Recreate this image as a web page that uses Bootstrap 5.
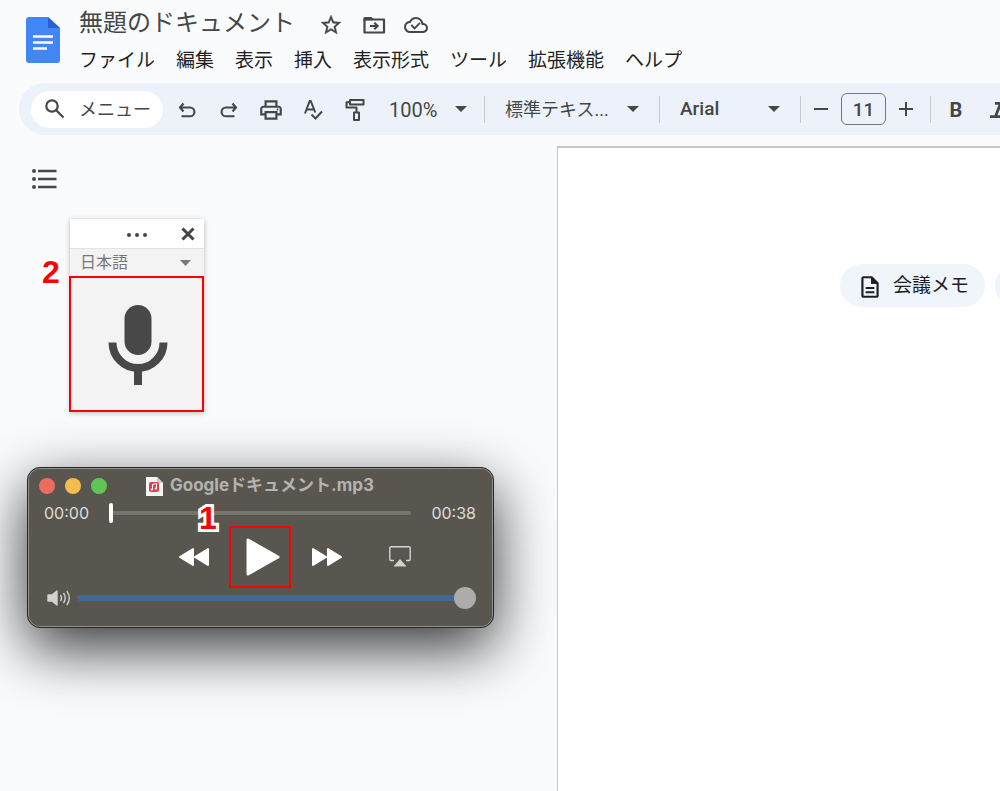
<!DOCTYPE html>
<html lang="ja">
<head>
<meta charset="utf-8">
<meta name="viewport" content="width=device-width, initial-scale=1">
<title>無題のドキュメント</title>
<link href="https://cdn.jsdelivr.net/npm/bootstrap@5.3.0/dist/css/bootstrap.min.css" rel="stylesheet">
<style>
  body { background: #f9fbfd; color: #1f1f1f; font-family: Roboto, "Noto Sans CJK JP", sans-serif; min-height: 100vh; overflow: hidden; }
  svg { display: block; flex: none; }
  button, select { color: inherit; }
  .plain { border: 0; background: none; padding: 0; }

  .app-head { padding: 8px 0 0 26px; height: 83px; gap: 19px; }
  .doc-logo { margin-top: 9px; }
  .doc-title { font-size: 24px; line-height: 30px; color: #444746; margin: 0; font-weight: 400; }
  .title-icons { margin-left: 24px; gap: 17px; color: #444746; padding-top: 4px; }
  .menus { gap: 21px; margin-top: 9px; }
  .menus a { font-size: 19px; line-height: 28px; color: #1f1f1f; text-decoration: none; }

  .toolbar { height: 52px; margin-left: 19px; padding-left: 12px; background: #edf2fa; border-radius: 26px 0 0 26px; color: #444746; font-size: 20px; }
  .toolbar > * { flex: none; }
  .search-pill { width: 132px; height: 37px; border-radius: 19px; background: #fff; padding-left: 12px; margin-right: 3px; gap: 12px; font-size: 18px; }
  .tool { width: 42px; height: 42px; padding-top: 2px; display: flex; align-items: center; justify-content: center; }
  .step { width: 40px; padding-top: 0; }
  .rule { width: 1px; height: 27px; background: #c7c9cc; }
  .pick { appearance: none; border: 0; padding: 0; height: 36px; background: url("data:image/svg+xml,%3Csvg xmlns='http://www.w3.org/2000/svg' width='12' height='6'%3E%3Cpath d='M0 0h12L6 6z' fill='%23444746'/%3E%3C/svg%3E") no-repeat right center; }
  .pick-zoom { width: 78px; margin: 0 17px 0 13px; padding-top: 2px; }
  .pick-style { width: 134px; margin: 0 20px; font-size: 18px; }
  .pick-font { width: 100px; margin: 0 20px; font-size: 19px; font-weight: 500; }
  .size-box { width: 45px; height: 32px; border: 1px solid #747775; border-radius: 6px; background: none; text-align: center; font-size: 19px; font-weight: 500; color: #444746; padding: 0; }

  .workspace { margin-top: 11px; min-height: 645px; }
  .side { flex: 0 0 557px; }
  .outline-btn { display: block; margin: 22px 0 0 31px; }
  .paper { background: #fff; border: solid #c7c9c9; border-width: 2px 0 0 1px; padding: 116px 0 0 282px; gap: 10px; }
  .chip { flex: none; height: 43px; border: 0; border-radius: 22px; background: #f0f4fb; padding: 2px 17px 0; font-size: 19px; gap: 10px; width: 145px; }

  .voice { width: 134px; margin: 29px 0 0 70px; box-shadow: 0 1px 5px rgba(0,0,0,.28); background: #f3f3f3; color: #444; }
  .voice-head { height: 30px; background: #fff; border-bottom: 1px solid #e2e2e2; padding-right: 9px; }
  .voice-lang { width: 100%; height: 27px; padding: 0 0 0 10px; font-size: 16px; color: #777; background-position: right 13px center; background-image: url("data:image/svg+xml,%3Csvg xmlns='http://www.w3.org/2000/svg' width='11' height='6'%3E%3Cpath d='M0 0h11L5.5 6z' fill='%23777'/%3E%3C/svg%3E"); }
  .marked { outline: 2px solid #f00; outline-offset: -2px; }
  .mic { height: 136px; width: 135px; margin-left: -1px; padding: 2px 0 0 3px; display: flex; align-items: center; justify-content: center; }
  .note { position: absolute; font: bold 32px/32px "Liberation Sans", sans-serif; color: #f00; -webkit-text-stroke: 6px #fff; paint-order: stroke fill; }
  .note-voice { left: -28px; top: 37px; }
  .note-play { left: 171px; top: 34px; }

  .player { width: 467px; height: 161px; margin: 55px 0 0 27px; border-radius: 13px; background: #595650; border: 1px solid #292826; box-shadow: inset 0 0 0 1px #92908b, 0 20px 60px rgba(0,0,0,.8); font-family: Inter, "Noto Sans CJK JP", sans-serif; color: #dedcd9; padding: 8px 17px 0 11px; }
  .p-title { height: 20px; color: #b4b2af; font-size: 17px; font-weight: 700; }
  .lights { gap: 10px; }
  .light { width: 16px; height: 16px; border-radius: 50%; border: 0; padding: 0; }
  .light-close { background: #ee6a5f; }
  .light-min { background: #f5bd4f; }
  .light-max { background: #61c454; }
  .p-name { margin-left: 39px; gap: 7px; }
  .p-time { height: 34px; font-size: 16px; padding-left: 5px; gap: 20px; }
  .p-ctl { height: 62px; margin-top: -4px; padding-left: 139px; color: #fff; }
  .play { width: 62px; height: 62px; margin: 0 20px 0 19px; padding-left: 5px; display: flex; align-items: center; justify-content: center; }
  .airplay { margin-left: 46px; }
  .p-vol { height: 22px; margin-top: -1px; padding-left: 8px; gap: 5px; }
  .slide { appearance: none; background: none; margin: 0; flex: 1 1 0; min-width: 0; height: 22px; }
  .slide::-webkit-slider-runnable-track { height: 4px; border-radius: 2px; background: #77746e; }
  .slide::-webkit-slider-thumb { appearance: none; width: 4px; height: 20px; margin-top: -8px; border-radius: 2px; background: #fff; }
  .vol::-webkit-slider-runnable-track { height: 6px; border-radius: 3px; background: #40689b; }
  .vol::-webkit-slider-thumb { width: 22px; height: 22px; border-radius: 50%; background: #adacaa; }
</style>
</head>
<body>
<header class="app-head d-flex">
  <svg class="doc-logo" width="34" height="46" viewBox="0 0 34 46"><path d="M3 0h19l12 11v32a3 3 0 0 1-3 3H3a3 3 0 0 1-3-3V3a3 3 0 0 1 3-3z" fill="#4285f4"/><path d="M22 0l12 11H22z" fill="#2a62c9"/><path d="M7 19.500h20M7 25.500h20M7 31.500h14" stroke="#fff" stroke-width="2.600"/></svg>
  <div>
    <div class="d-flex">
      <h1 class="doc-title">無題のドキュメント</h1>
      <div class="title-icons d-flex">
        <button class="plain" aria-label="スター"><svg width="24" height="24" viewBox="0 0 24 24" fill="currentColor" stroke="currentColor" stroke-width=".4"><path d="M22 9.240l-7.190-.62L12 2 9.190 8.630 2 9.240l5.460 4.730L5.820 21 12 17.270 18.180 21l-1.630-7.030zM12 15.400l-3.760 2.270 1-4.280-3.320-2.880 4.380-.38L12 6.100l1.710 4.040 4.380.38-3.320 2.880 1 4.280z"/></svg></button>
        <button class="plain" aria-label="移動"><svg width="27" height="24" viewBox="0 0 27 24" fill="none" stroke="currentColor" stroke-width="2.200"><path d="M4.500 6.500H24v13H4.500z" stroke-linejoin="round"/><path d="M3.400 7.500V5.500A1.500 1.500 0 0 1 4.900 4h6.500l3 3z" fill="currentColor" stroke="none"/><path d="M10 13h7.500M14.300 9.700l3.300 3.300-3.300 3.300"/></svg></button>
        <button class="plain" aria-label="保存済み"><svg width="24" height="24" viewBox="0 0 24 24" fill="currentColor"><path d="M19.350 10.040A7.490 7.490 0 0 0 12 4C9.110 4 6.600 5.640 5.350 8.040A6 6 0 0 0 0 14c0 3.310 2.690 6 6 6h13c2.760 0 5-2.240 5-5 0-2.640-2.050-4.780-4.650-4.960zM19 18H6c-2.210 0-4-1.790-4-4 0-2.050 1.530-3.760 3.560-3.970l1.070-.11.5-.95A5.470 5.470 0 0 1 12 6c2.620 0 4.880 1.860 5.390 4.430l.3 1.500 1.530.11A2.980 2.980 0 0 1 22 15c0 1.650-1.350 3-3 3z"/><path d="M7.300 12l3.300 3.300L16 9.900" fill="none" stroke="currentColor" stroke-width="1.900"/></svg></button>
      </div>
    </div>
    <nav class="menus d-flex text-nowrap" aria-label="メニュー"><a href="#">ファイル</a><a href="#">編集</a><a href="#">表示</a><a href="#">挿入</a><a href="#">表示形式</a><a href="#">ツール</a><a href="#">拡張機能</a><a href="#">ヘルプ</a></nav>
  </div>
</header>

<div class="toolbar d-flex align-items-center overflow-hidden" role="toolbar">
  <button class="plain search-pill d-flex align-items-center text-nowrap"><svg width="24" height="24" viewBox="0 0 24 24" fill="none" stroke="currentColor" stroke-width="2.200"><circle cx="9" cy="9" r="5.700"/><path d="M13 13l7.500 7.500"/></svg><span>メニュー</span></button>
  <button class="plain tool" aria-label="元に戻す"><svg width="20" height="20" viewBox="0 0 20 20" fill="none" stroke="currentColor" stroke-width="2.100"><path d="M6.500 3.500L3 7.500l3.500 4M3 7.500h10a4.200 4.200 0 0 1 0 8.800H4.500"/></svg></button>
  <button class="plain tool" aria-label="やり直し"><svg width="20" height="20" viewBox="0 0 20 20" fill="none" stroke="currentColor" stroke-width="2.100"><path d="M13.500 3.500l3.500 4-3.500 4M17 7.500H7a4.200 4.200 0 0 0 0 8.800h8.500"/></svg></button>
  <button class="plain tool" aria-label="印刷"><svg width="26" height="26" viewBox="0 0 24 24" fill="currentColor"><path d="M19 8h-1V3H6v5H5c-1.660 0-3 1.340-3 3v6h4v4h12v-4h4v-6c0-1.660-1.340-3-3-3zM8 5h8v3H8zm8 14H8v-4h8zm2-4v-2H6v2H4v-4c0-.55.450-1 1-1h14c.55 0 1 .45 1 1v4z"/><circle cx="18" cy="11.500" r=".9"/></svg></button>
  <button class="plain tool" aria-label="スペルチェック"><svg width="22" height="22" viewBox="0 0 22 22" fill="none" stroke="currentColor" stroke-width="2"><path d="M3 14.500L7.700 2h1l4.600 11.500M4.500 10.500h7.500M9.500 15.500l4 4 6.500-7"/></svg></button>
  <button class="plain tool" aria-label="書式の貼り付け"><svg width="22" height="24" viewBox="0 0 22 24" fill="none" stroke="currentColor" stroke-width="2" stroke-linejoin="round"><path d="M6 2h13.500v4.500H6zM6 4.200H2.500v5.300h10V14M10 14.500h5V22h-5z"/></svg></button>
  <select class="pick pick-zoom" aria-label="ズーム"><option>100%</option></select>
  <span class="rule"></span>
  <select class="pick pick-style" aria-label="スタイル"><option>標準テキス...</option></select>
  <span class="rule"></span>
  <select class="pick pick-font" aria-label="フォント"><option>Arial</option></select>
  <span class="rule"></span>
  <button class="plain tool step" aria-label="小さく"><svg width="14" height="14" viewBox="0 0 14 14" stroke="currentColor" stroke-width="2"><path d="M0 7h14"/></svg></button>
  <input class="size-box" value="11" aria-label="フォントサイズ">
  <button class="plain tool step" aria-label="大きく"><svg width="14" height="14" viewBox="0 0 14 14" stroke="currentColor" stroke-width="2"><path d="M0 7h14M7 0v14"/></svg></button>
  <span class="rule ms-1"></span>
  <button class="plain tool fw-bold ms-1">B</button>
  <button class="plain tool" aria-label="斜体"><svg width="18" height="18" viewBox="0 0 18 18" stroke="currentColor" stroke-width="2.800"><path d="M6 2.400h11M1 15.600h11M11.500 2.400l-5 13.200"/></svg></button>
</div>

<main class="workspace d-flex">
  <aside class="side">
    <button class="plain outline-btn" aria-label="見出し"><svg width="26" height="22" viewBox="0 0 26 22" stroke="#444746" fill="#444746"><path d="M7 3h18.500M7 11h18.500M7 19h18.500" stroke-width="2.600"/><g stroke="none"><circle cx="3" cy="3" r="2"/><circle cx="3" cy="11" r="2"/><circle cx="3" cy="19" r="2"/></g></svg></button>

    <section class="voice position-relative" aria-label="音声入力">
      <div class="voice-head d-flex align-items-center justify-content-end">
        <svg width="60" height="14" viewBox="0 0 60 14" fill="#444"><circle cx="8" cy="8" r="2"/><circle cx="16" cy="8" r="2"/><circle cx="24" cy="8" r="2"/></svg>
        <button class="plain" aria-label="閉じる"><svg width="14" height="14" viewBox="0 0 14 14" stroke="#444" stroke-width="3"><path d="M1.500 1.500l11 11M12.500 1.500l-11 11"/></svg></button>
      </div>
      <select class="pick voice-lang d-block" aria-label="言語"><option>日本語</option></select>
      <button class="plain mic marked" aria-label="マイク"><svg width="60" height="80" viewBox="0 0 60 80"><rect x="16.500" width="27" height="50" rx="13.500" fill="#484848"/><path d="M4.500 37.500a25.500 25.500 0 0 0 51 0M30 63v17" fill="none" stroke="#484848" stroke-width="8"/></svg></button>
      <span class="note note-voice">2</span>
    </section>

    <section class="player position-relative" aria-label="プレーヤー">
      <div class="p-title d-flex align-items-center">
        <div class="lights d-flex"><button class="light light-close" aria-label="閉じる"></button><button class="light light-min" aria-label="最小化"></button><button class="light light-max" aria-label="拡大"></button></div>
        <div class="p-name d-flex align-items-center text-nowrap"><svg width="17" height="19" viewBox="0 0 17 19"><path d="M0 0h11l6 6v13H0z" fill="#f5f5f5"/><path d="M11 0l6 6h-6z" fill="#cfcfcf"/><rect x="3" y="5" width="10" height="10" rx="2" fill="#e0404f"/><path d="M6.500 12.500V7.500l4-1v5" stroke="#fff" fill="none"/><circle cx="5.800" cy="12.500" r="1.100" fill="#fff"/><circle cx="9.800" cy="11.600" r="1.100" fill="#fff"/></svg><span>Googleドキュメント.mp3</span></div>
      </div>
      <div class="p-time d-flex align-items-center"><span>00:00</span><input class="slide" type="range" min="0" max="38" value="0" aria-label="再生位置"><span>00:38</span></div>
      <div class="p-ctl d-flex align-items-center">
        <button class="plain" aria-label="巻き戻し"><svg width="32" height="20" viewBox="0 0 32 20" fill="#fff" stroke="#fff" stroke-width="2" stroke-linejoin="round"><path d="M15 2v16L2 10zM30 2v16L17 10z"/></svg></button>
        <button class="plain play marked" aria-label="再生"><svg width="34" height="38" viewBox="0 0 34 38" fill="#fff" stroke="#fff" stroke-width="3" stroke-linejoin="round"><path d="M2 2v34l30-17z"/></svg></button>
        <button class="plain" aria-label="早送り"><svg width="32" height="20" viewBox="0 0 32 20" fill="#fff" stroke="#fff" stroke-width="2" stroke-linejoin="round"><path d="M2 2v16l13-8zM17 2v16l13-8z"/></svg></button>
        <button class="plain airplay" aria-label="AirPlay"><svg width="22" height="22" viewBox="0 0 22 22" fill="none" stroke="#d4d2cf" stroke-width="1.400"><path d="M5 14.500H2A1.200 1.200 0 0 1 .8 13.300V2A1.200 1.200 0 0 1 2 .8h18A1.200 1.200 0 0 1 21.200 2v11.300a1.200 1.200 0 0 1-1.200 1.200h-3"/><path d="M11 13l6.500 7.500h-13z" fill="#d4d2cf" stroke="none"/></svg></button>
      </div>
      <div class="p-vol d-flex align-items-center"><svg width="25" height="18" viewBox="0 0 25 18" fill="none" stroke="#d4d2cf" stroke-width="1.400"><path d="M1 6h4l5-4v14l-5-4H1z" fill="#d4d2cf" stroke-linejoin="round"/><path d="M13.500 6q2 3 0 6M16.500 4q3.500 5 0 10M19.800 1.800q5 7.200 0 14.400"/></svg><input class="slide vol" type="range" value="100" aria-label="音量"></div>
      <span class="note note-play">1</span>
    </section>
  </aside>

  <section class="paper position-relative d-flex align-items-start flex-fill overflow-hidden" style="min-width:0" aria-label="文書">
    <button class="chip d-flex align-items-center text-nowrap"><svg width="26" height="26" viewBox="0 0 24 24" fill="currentColor"><path d="M8 16h8v1.800H8zm0-4h8v1.800H8zM14 2H6c-1.100 0-2 .9-2 2v16c0 1.100.9 2 2 2h12c1.100 0 2-.9 2-2V8zm4 18H6V4h7v5h5z"/><path d="M13 3v6h6z"/></svg><span>会議メモ</span></button>
    <button class="chip" aria-label="その他"></button>
  </section>
</main>
<script src="https://cdn.jsdelivr.net/npm/bootstrap@5.3.0/dist/js/bootstrap.bundle.min.js"></script>
</body>
</html>
